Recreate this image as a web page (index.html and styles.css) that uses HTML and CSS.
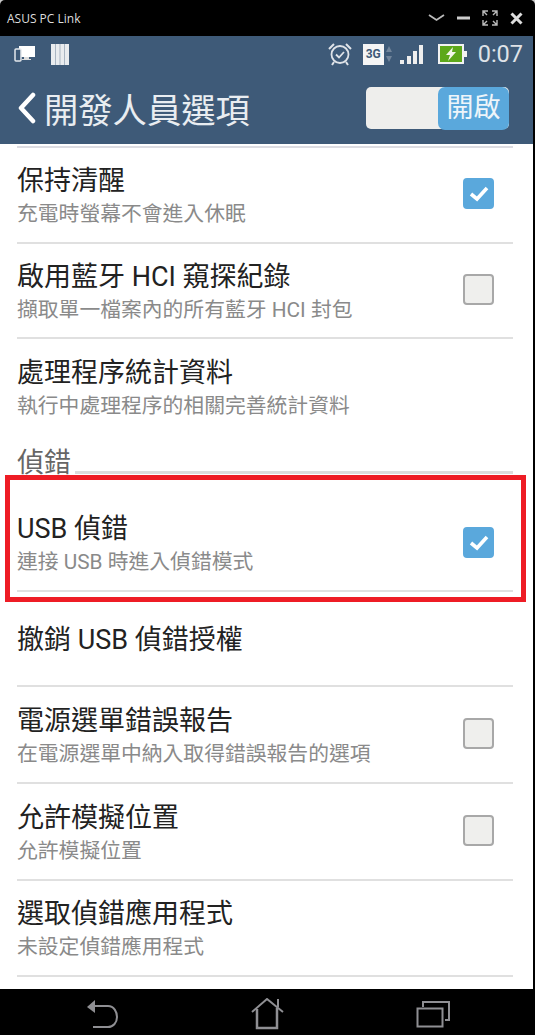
FILE: index.html
```html
<!DOCTYPE html>
<html lang="zh-Hant">
<head>
  <meta charset="UTF-8">
  <meta name="viewport" content="width=device-width, initial-scale=1.0">
  <title>ASUS PC Link</title>
  <link rel="stylesheet" href="styles.css">
</head>
<body>
  <div class="window">
    <div class="title-bar">
      <span class="title-text">ASUS PC Link</span>
      <div class="window-buttons">
        <svg width="17" height="10" viewBox="0 0 17 10"><path d="M1 2 L8.500 7 L16 2" fill="none" stroke="#bbb" stroke-width="1.800"/></svg>
        <svg width="13" height="10" viewBox="0 0 13 10"><path d="M0 5 H13" stroke="#ccc" stroke-width="3"/></svg>
        <svg width="16" height="16" viewBox="0 0 16 16"><path d="M1 6 V1 H6 M1 1 L5 5 M10 1 H15 V6 M15 1 L11 5 M1 10 V15 H6 M1 15 L5 11 M10 15 H15 V10 M15 15 L11 11" fill="none" stroke="#bbb" stroke-width="1.400"/></svg>
        <svg width="13" height="13" viewBox="0 0 13 13"><path d="M1.500 1.500 L11.500 11.500 M11.500 1.500 L1.500 11.500" stroke="#ddd" stroke-width="3"/></svg>
      </div>
    </div>
    <div class="screen">
      <header class="app-header">
        <div class="status-bar">
          <div class="status-left">
            <svg width="22" height="16" viewBox="0 0 22 16"><rect x="5" y="0" width="16" height="11" fill="#fff"/><rect x="10" y="11" width="5" height="2" fill="#ddd"/><rect x="8" y="13" width="9" height="1" fill="#ddd"/><rect x="1" y="3" width="6" height="12" rx="1" fill="#3e5a78" stroke="#e4e8ec" stroke-width="1.500"/></svg>
            <svg width="18" height="21" viewBox="0 0 18 21"><rect width="18" height="21" fill="#e9ecef"/><path d="M4.500 0 V21 M9 0 V21 M13.500 0 V21" stroke="#a9b5c2" stroke-width="1"/></svg>
          </div>
          <div class="status-right">
            <svg class="alarm" width="26" height="24" viewBox="0 0 26 24"><circle cx="13" cy="12.500" r="8.500" fill="none" stroke="#dfe3e8" stroke-width="1.800"/><path d="M9 12.500 L12 15.500 L17 10" fill="none" stroke="#dfe3e8" stroke-width="1.800"/><path d="M2 7 L7 2 M24 7 L19 2 M7 20 L5 23 M19 20 L21 23" stroke="#dfe3e8" stroke-width="2"/></svg>
            <div class="net-group">
              <span class="net-badge">3G</span>
              <svg width="8" height="18" viewBox="0 0 8 18"><path d="M4 1 L7 7 H1 Z M4 17 L7 11 H1 Z" fill="#71859b"/></svg>
              <svg class="signal" width="24" height="21" viewBox="0 0 24 21"><rect x="0" y="16" width="4" height="4" fill="#eee"/><rect x="7" y="12" width="4" height="8" fill="#eee"/><rect x="13" y="7" width="4" height="13" fill="#eee"/><rect x="19" y="1" width="4" height="19" fill="#eee"/></svg>
            </div>
            <svg class="battery" width="29" height="20" viewBox="0 0 29 20"><rect x="1" y="1" width="24" height="18" fill="#5da81a" stroke="#f2f2f2" stroke-width="2"/><rect x="25" y="7" width="4" height="6" fill="#f2f2f2"/><path d="M15 3 L8 11 H12 L10 17 L18 8 H14 Z" fill="#f4f7ea"/></svg>
            <span class="clock">0:07</span>
          </div>
        </div>
        <div class="action-bar">
          <div class="page-title">
            <svg width="20" height="32" viewBox="0 0 20 32"><path d="M16 3 L4 16 L16 29" fill="none" stroke="#fff" stroke-width="4.500" stroke-linecap="round" stroke-linejoin="round"/></svg>
            <h1>開發人員選項</h1>
          </div>
          <div class="toggle">
            <span class="toggle-on">開啟</span>
          </div>
        </div>
      </header>

      <main class="settings">
        <div class="rule rule-top"></div>

        <div class="row row-first">
          <div class="row-text">
            <div class="row-title">保持清醒</div>
            <div class="row-sub">充電時螢幕不會進入休眠</div>
          </div>
          <span class="check checked"><svg width="22" height="18" viewBox="0 0 22 18"><path d="M3 9 L9 14 L19 3" fill="none" stroke="#fff" stroke-width="3.600"/></svg></span>
        </div>
        <div class="row row-short">
          <div class="row-text">
            <div class="row-title">啟用藍牙 HCI 窺探紀錄</div>
            <div class="row-sub">擷取單一檔案內的所有藍牙 HCI 封包</div>
          </div>
          <span class="check"></span>
        </div>
        <div class="row row-last">
          <div class="row-text">
            <div class="row-title">處理程序統計資料</div>
            <div class="row-sub">執行中處理程序的相關完善統計資料</div>
          </div>
        </div>

        <div class="section-head">
          <span class="section-label">偵錯</span>
          <span class="section-line"></span>
        </div>

        <div class="row row-usb">
          <div class="row-text">
            <div class="row-title">USB 偵錯</div>
            <div class="row-sub">連接 USB 時進入偵錯模式</div>
          </div>
          <span class="check checked"><svg width="22" height="18" viewBox="0 0 22 18"><path d="M3 9 L9 14 L19 3" fill="none" stroke="#fff" stroke-width="3.600"/></svg></span>
          <div class="highlight"></div>
        </div>
        <div class="row row-single">
          <div class="row-text">
            <div class="row-title">撤銷 USB 偵錯授權</div>
          </div>
        </div>
        <div class="row">
          <div class="row-text">
            <div class="row-title">電源選單錯誤報告</div>
            <div class="row-sub">在電源選單中納入取得錯誤報告的選項</div>
          </div>
          <span class="check"></span>
        </div>
        <div class="row">
          <div class="row-text">
            <div class="row-title">允許模擬位置</div>
            <div class="row-sub">允許模擬位置</div>
          </div>
          <span class="check"></span>
        </div>
        <div class="row row-end">
          <div class="row-text">
            <div class="row-title">選取偵錯應用程式</div>
            <div class="row-sub">未設定偵錯應用程式</div>
          </div>
        </div>
      </main>

      <nav class="nav-bar">
        <svg width="32" height="30" viewBox="0 0 32 30"><path d="M0 8 L8 1 V14 Z" fill="#8f8f93"/><path d="M8 7 H21 C27 7 30 13 30 18 C30 24 26 28 21 28 H6" fill="none" stroke="#8f8f93" stroke-width="2"/></svg>
        <svg width="33" height="32" viewBox="0 0 33 32"><path d="M1 14 L16 1 L32 14" fill="none" stroke="#8f8f93" stroke-width="2"/><path d="M27 1 V9" stroke="#8f8f93" stroke-width="2"/><path d="M6 11 V30 H26 V10" fill="none" stroke="#8f8f93" stroke-width="2.500"/></svg>
        <svg width="34" height="28" viewBox="0 0 34 28"><path d="M7 7 V2 H33 V20 H29" fill="none" stroke="#8f8f93" stroke-width="2"/><rect x="1.500" y="8.500" width="25" height="18" fill="none" stroke="#8f8f93" stroke-width="2"/></svg>
      </nav>
    </div>
  </div>
</body>
</html>
```

FILE: styles.css
```css
* {
  box-sizing: border-box;
}
html,
body {
  margin: 0;
  padding: 0;
  background-color: #c8c8c8;
}
body {
  width: 535px;
  height: 1035px;
  overflow: hidden;
  font-family: "Roboto", "Noto Sans CJK TC", sans-serif;
}
.window {
  display: flex;
  flex-direction: column;
  height: 1035px;
  background-color: #000;
  border-radius: 5px 5px 0 0;
}
.title-bar {
  display: flex;
  align-items: center;
  justify-content: space-between;
  flex: 0 0 36px;
  padding: 0 12px 0 7px;
  color: #ddd;
  font-family: "Open Sans", sans-serif;
  font-size: 12px;
}
.window-buttons {
  display: flex;
  align-items: center;
  gap: 12px;
}
.screen {
  display: flex;
  flex-direction: column;
  flex: 1;
  padding-right: 2px;
}
.app-header {
  flex: 0 0 108px;
  background-color: #3e5a78;
}
.status-bar {
  display: flex;
  align-items: center;
  justify-content: space-between;
  height: 36px;
  padding: 0 10px 0 14px;
}
.status-left {
  display: flex;
  align-items: center;
  gap: 15px;
}
.status-right {
  display: flex;
  align-items: center;
  gap: 14px;
}
.alarm {
  margin-right: -4px;
}
.net-group {
  display: flex;
  align-items: center;
  gap: 1px;
}
.signal {
  margin-left: 6px;
}
.net-badge {
  width: 21px;
  height: 21px;
  background-color: #f5f5f5;
  color: #3e5a78;
  font-size: 12px;
  font-weight: 700;
  line-height: 21px;
  text-align: center;
}
.clock {
  color: #dfe3e8;
  font-size: 23.5px;
  margin-left: -3px;
}
.action-bar {
  display: flex;
  align-items: center;
  justify-content: space-between;
  height: 72px;
  padding: 0 24px 0 17px;
}
.page-title {
  display: flex;
  align-items: center;
  gap: 7px;
}
.page-title h1 {
  margin: 0;
  color: #e9edf1;
  font-size: 34.300px;
  font-weight: 400;
}
.toggle {
  display: flex;
  justify-content: flex-end;
  width: 143px;
  height: 42px;
  background-color: #eeeeec;
  border-radius: 5px;
}
.toggle-on {
  width: 71px;
  height: 43px;
  background-color: #5aa8dc;
  border-radius: 7px;
  color: #eef5fa;
  font-size: 27px;
  line-height: 42px;
  text-align: center;
}
.settings {
  flex: 1;
  background-color: #fff;
  padding: 0 20px 0 17px;
}
.rule {
  height: 2px;
  background-color: #dcdce2;
}
.rule-top {
  margin-top: 2px;
}
.row {
  position: relative;
  display: flex;
  align-items: center;
  justify-content: space-between;
  height: 97px;
  padding-right: 19px;
  border-bottom: 2px solid #e0e0e0;
}
.row-text {
  margin-top: 4px;
}
.row-first {
  height: 96px;
}
.row-short {
  height: 95px;
}
.row-last {
  height: 95px;
  border-bottom: none;
}
.row-usb {
  height: 116px;
  padding-top: 22px;
}
.row-usb .row-text {
  margin-top: 2px;
}
.row-single {
  height: 95px;
  align-items: flex-start;
  padding-top: 27px;
}
.row-end {
  height: 96px;
}
.row-title {
  color: #222;
  font-size: 27px;
  line-height: 34px;
}
.row-sub {
  color: #8a8a8a;
  font-size: 20.800px;
  line-height: 32px;
}
.check {
  display: flex;
  align-items: center;
  justify-content: center;
  width: 31px;
  height: 31px;
  margin-top: -3px;
  background-color: #efefed;
  border: 2px solid #a8a8a8;
  border-radius: 4px;
}
.check.checked {
  background-color: #5aa8dc;
  border-color: #5aa8dc;
}
.section-head {
  display: flex;
  align-items: flex-end;
  gap: 4px;
  height: 42px;
}
.section-label {
  margin-bottom: -4px;
  color: #666;
  font-size: 27px;
  line-height: 34px;
}
.section-line {
  flex: 1;
  height: 3px;
  margin-bottom: 2px;
  background-color: #dcdcdc;
}
/* red box drawn over the USB row */
.highlight {
  position: absolute;
  left: -12px;
  right: -13px;
  top: -1px;
  bottom: -12px;
  border: 5px solid #ee1c25;
}
.nav-bar {
  display: flex;
  align-items: center;
  gap: 132px;
  flex: 0 0 46px;
  padding: 4px 0 0 87px;
  background-color: #000;
}
```
